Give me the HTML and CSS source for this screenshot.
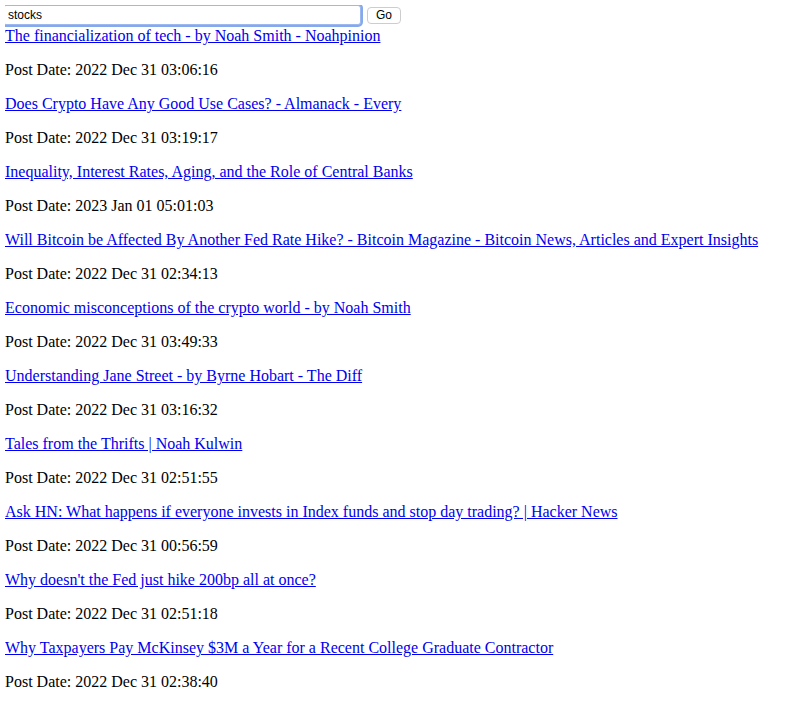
FILE: index.html
```html
<!DOCTYPE html>
<html>
<head>
<meta charset="utf-8">
<link rel="stylesheet" href="styles.css">
</head>
<body>
<form class="search">
  <input class="search-input" type="text" value="stocks">
  <button class="search-btn" type="button">Go</button>
</form>
<div class="results">
  <div class="item"><a href="#">The financialization of tech - by Noah Smith - Noahpinion</a><p>Post Date: 2022 Dec 31 03:06:16</p></div>
  <div class="item"><a href="#">Does Crypto Have Any Good Use Cases? - Almanack - Every</a><p>Post Date: 2022 Dec 31 03:19:17</p></div>
  <div class="item"><a href="#">Inequality, Interest Rates, Aging, and the Role of Central Banks</a><p>Post Date: 2023 Jan 01 05:01:03</p></div>
  <div class="item"><a href="#">Will Bitcoin be Affected By Another Fed Rate Hike? - Bitcoin Magazine - Bitcoin News, Articles and Expert Insights</a><p>Post Date: 2022 Dec 31 02:34:13</p></div>
  <div class="item"><a href="#">Economic misconceptions of the crypto world - by Noah Smith</a><p>Post Date: 2022 Dec 31 03:49:33</p></div>
  <div class="item"><a href="#">Understanding Jane Street - by Byrne Hobart - The Diff</a><p>Post Date: 2022 Dec 31 03:16:32</p></div>
  <div class="item"><a href="#">Tales from the Thrifts | Noah Kulwin</a><p>Post Date: 2022 Dec 31 02:51:55</p></div>
  <div class="item"><a href="#">Ask HN: What happens if everyone invests in Index funds and stop day trading? | Hacker News</a><p>Post Date: 2022 Dec 31 00:56:59</p></div>
  <div class="item"><a href="#">Why doesn't the Fed just hike 200bp all at once?</a><p>Post Date: 2022 Dec 31 02:51:18</p></div>
  <div class="item"><a href="#">Why Taxpayers Pay McKinsey $3M a Year for a Recent College Graduate Contractor</a><p>Post Date: 2022 Dec 31 02:38:40</p></div>
</div>
</body>
</html>
```
FILE: styles.css
```css
body {
  margin: 5px;
  font-family: "Liberation Serif", serif;
  font-size: 16px;
  color: #000;
  background: #fff;
}
.search {
  display: flex;
  align-items: flex-start;
  gap: 6px;
  margin: 0 0 0 -2px;
  height: 22px;
}
.search-input {
  box-sizing: border-box;
  width: 358px;
  height: 20px;
  margin: 0;
  padding: 1px 4px;
  border: 1px solid #9db8ef;
  border-radius: 3px;
  outline: none;
  box-shadow: 0 0 0 2px #86a8ec;
  font-family: "Liberation Sans", Arial, sans-serif;
  font-size: 12px;
  color: #000;
}
.search-btn {
  box-sizing: border-box;
  height: 17px;
  margin-top: 2px;
  padding: 0 8px;
  border: 1px solid #cdcdcd;
  border-radius: 4px;
  background: #fff;
  font-family: "Liberation Sans", Arial, sans-serif;
  font-size: 12px;
  line-height: 15px;
  color: #000;
}
.item a {
  color: #0000ee;
  text-decoration: underline;
}
.item p {
  margin: 16px 0;
}
```
